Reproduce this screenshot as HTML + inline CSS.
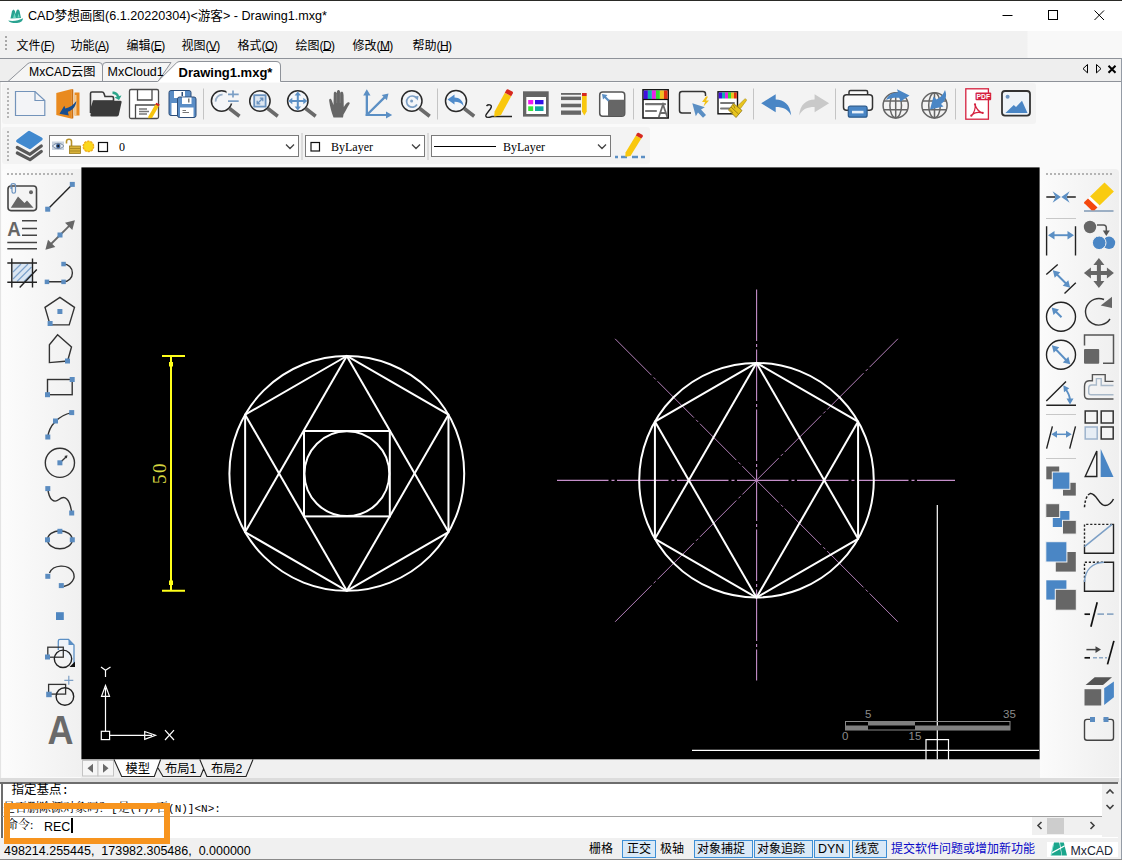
<!DOCTYPE html>
<html lang="zh">
<head>
<meta charset="utf-8">
<title>CAD梦想画图</title>
<style>
*{box-sizing:border-box;margin:0;padding:0}
html,body{width:1122px;height:860px;overflow:hidden;background:#f0f0f0}
body{position:relative;font-family:"Liberation Sans","Noto Sans CJK SC",sans-serif;font-size:12px;color:#000}
.abs{position:absolute}
.t{position:absolute;white-space:nowrap;line-height:1}
#topline{left:0;top:0;width:1122px;height:1px;background:#2a2a26}
#titlebar{left:0;top:1px;width:1122px;height:30px;background:#fff}
#menubar{left:0;top:31px;width:1122px;height:27px;background:linear-gradient(90deg,#f1f1f1 0,#f1f1f1 1027px,#f8f8f8 1028px)}
#tabbar{left:0;top:58px;width:1122px;height:24px;background:#eeeeee;border-top:1px solid #8e9299}
#tb1{left:0;top:82px;width:1040px;height:44px}
#dock{left:0;top:82px;width:1122px;height:696px;background:#fafafa}
#tb1bg{left:2px;top:83px;width:1034px;height:41px;background:#f3f3f3;border-radius:3px}
#tb2bg{left:2px;top:127px;width:648px;height:37px;background:#f3f3f3;border-radius:3px}
#lbg{left:2px;top:169px;width:79px;height:608px;background:linear-gradient(90deg,#fcfcfc,#f0f0f0);border-radius:4px 0 0 0}
#rbg{left:1040px;top:169px;width:79px;height:608px;background:linear-gradient(90deg,#fbfbfb,#efefef);border-radius:0 4px 0 0}
#ledge{left:0;top:82px;width:1px;height:696px;background:#e4e4e4}
#tb2{left:0;top:127px;width:660px;height:40px}
#leftbar{left:0;top:168px;width:82px;height:591px}
#rightbar{left:1040px;top:168px;width:82px;height:591px}
#canvas{left:81px;top:167px;width:959px;height:593px;overflow:hidden;z-index:2}
#cmd{left:0;top:782px;width:1122px;height:56px;background:#fff}
#status{left:0;top:838px;width:1122px;height:22px;background:#f0f0f0}
.mi{top:9px;font-size:12px;margin-left:-0.5px}
.ml{letter-spacing:-0.6px}
#laytabs{left:82px;top:759px;width:958px;height:19px;background:#f0f0f0;box-shadow:-1px 0 0 #f0f0f0}
#orange{left:4px;top:803px;width:166px;height:40.500px;border:6px solid #f7941e;z-index:5}
.st{top:5px;font-size:12px}
.sb{top:2px;height:18px;background:#d9e9f7;border:1px solid #3d8fd6}
.sim{font-family:"Liberation Mono","Noto Serif CJK SC",monospace;font-size:10px}
u{text-decoration:underline;text-underline-offset:0}
</style>
</head>
<body>
<div id="topline" class="abs"></div>
<div id="titlebar" class="abs">
  <svg class="abs" style="left:7px;top:7px" width="18" height="17" viewBox="7 8 18 17"><path d="M10.500 18.500 L12 11 L13.500 9.500 L15 11 L15.500 14 L16.500 10.500 L18 9.200 L19.500 10.800 L21 18Z" fill="#2aa391"/><path d="M13 18 L14.500 13 L16 18Z M17.500 17.500 l1-4 l1.200 4z" fill="#6fd6c0"/><path d="M8.200 20.500 C13 21.500 19 20.500 23 18.300 C23 21 21 22.800 17 23 C13 23.200 9.500 22.500 8.200 20.500Z" fill="#2aa391"/></svg>
  <div class="t" id="title" style="left:28px;top:9px;font-size:12.6px">CAD梦想画图(6.1.20220304)&lt;游客&gt; - Drawing1.mxg*</div>
  <svg class="abs" style="left:984px;top:0" width="138" height="30" viewBox="0 0 138 30" fill="none" stroke="#000" stroke-width="1">
    <path d="M18.5 14.5h10"/><rect x="64.5" y="9.5" width="9" height="9"/><path d="M110.5 9.5l9.5 9.5M120 9.5l-9.5 9.5"/>
  </svg>
</div>
<div id="menubar" class="abs"><div class="abs" style="left:5px;top:5px;width:2px;height:2px;background:#a8a8a8;box-shadow:0 4px 0 #a8a8a8,0 8px 0 #a8a8a8,0 12px 0 #a8a8a8"></div>
  <div class="t mi" style="left:17px">文件<span class="ml">(<u>F</u>)</span></div>
  <div class="t mi" style="left:71px">功能<span class="ml">(<u>A</u>)</span></div>
  <div class="t mi" style="left:127px">编辑<span class="ml">(<u>E</u>)</span></div>
  <div class="t mi" style="left:182px">视图<span class="ml">(<u>V</u>)</span></div>
  <div class="t mi" style="left:238px">格式<span class="ml">(<u>O</u>)</span></div>
  <div class="t mi" style="left:296px">绘图<span class="ml">(<u>D</u>)</span></div>
  <div class="t mi" style="left:353px">修改<span class="ml">(<u>M</u>)</span></div>
  <div class="t mi" style="left:413px">帮助<span class="ml">(<u>H</u>)</span></div>
</div>
<div id="tabbar" class="abs">
  <svg class="abs" style="left:0;top:0" width="1122" height="24" viewBox="0 0 1122 24">
    <path d="M8 22.500 L28 4.500 Q29.500 3.500 31.500 3.500 H99 Q102.500 3.500 102.500 7 V22.500" fill="#f5f5f5" stroke="#8e9299"/>
    <path d="M102.500 22.500 V7 Q102.500 3.500 106 3.500 H171 L158 22.500" fill="#f5f5f5" stroke="#8e9299"/>
    <path d="M157.700 23 L176.500 4 Q178 3 180 3 H276 Q280 3 280 7 V23 Z" fill="#fff"/>
    <path d="M0 22.500 H157.700 L176.300 4 Q177.800 2.500 180 2.500 H276 Q280.500 2.500 280.500 7 V22.500 H1122" fill="none" stroke="#8e9299"/>
    <g fill="none" stroke="#000" stroke-width="1"><path d="M1087.500 5.500 l-4.500 4.200 l4.500 4.200z"/><path d="M1096.500 5.500 l4.500 4.200 l-4.500 4.200z"/></g>
    <path d="M1108.500 6.800 l7 7 M1115.500 6.800 l-7 7" stroke="#000" stroke-width="2" fill="none"/>
  </svg>
  <div class="t" style="left:29px;top:7px;font-size:12.2px">MxCAD云图</div>
  <div class="t" style="left:107.500px;top:7px;font-size:12.5px">MxCloud1</div>
  <div class="t" style="left:178.500px;top:7px;font-size:13px;font-weight:bold">Drawing1.mxg*</div>
</div>
<div id="dock" class="abs"></div><div id="ledge" class="abs"></div><div id="tb1bg" class="abs"></div><div id="tb2bg" class="abs"></div><div id="lbg" class="abs"></div><div id="rbg" class="abs"></div>
<div id="tb1" class="abs"><svg class="abs" style="left:0;top:0" width="1040" height="44" viewBox="0 82 1040 44">
<!-- gripper -->
<g fill="#b4b4b4"><rect x="7" y="88" width="2" height="2"/><rect x="7" y="92" width="2" height="2"/><rect x="7" y="96" width="2" height="2"/><rect x="7" y="100" width="2" height="2"/><rect x="7" y="104" width="2" height="2"/><rect x="7" y="108" width="2" height="2"/><rect x="7" y="112" width="2" height="2"/><rect x="7" y="116" width="2" height="2"/></g>
<!-- separators -->
<g stroke="#c4c4c4" stroke-width="1"><path d="M203.500 88.500V119.500M437.500 88.500V119.500M633.500 88.500V119.500M753.500 88.500V119.500M835.500 88.500V119.500M955.500 88.500V119.500"/></g>
<!-- 1 new -->
<path d="M15.500 91.500H35L44.800 100.500V115.500H15.500Z" fill="#f3f4f7" stroke="#7393ba" stroke-width="1.2"/>
<path d="M35 91.500V100.500H44.800" fill="none" stroke="#7393ba" stroke-width="1.200"/>
<!-- 2 open (orange) -->
<path d="M56.300 93 L71.800 89 V118.800 L56.300 115Z" fill="#e98a1f"/>
<path d="M71.800 89 l1.500 0.500 V118.300 l-1.500 0.500Z" fill="#c96f12"/>
<rect x="74.500" y="92.500" width="5" height="23" fill="#e98a1f"/>
<rect x="74.500" y="95" width="2" height="20.500" fill="#f4c98f"/>
<path d="M76.300 101 C76 106.500 72.500 110.500 67.800 111.800 L68.800 115.600 L59.500 113.800 L64.300 105.800 L65.300 108.600 C69.500 107.600 73.500 105 76.300 101Z" fill="#174d8f"/>
<!-- 3 open folder dark -->
<path d="M90.500 93.500 Q90.500 92 92 92 H102 Q103.500 92 104 93.500 L105 96.500 H112 Q113.500 96.500 113.500 98 V101 H93.500 L90.500 113Z" fill="#f4f4f4" stroke="#3a3a3a" stroke-width="1.600"/>
<path d="M94.500 100.800 H120.500 Q122 100.800 121.600 102.300 L118.800 115 Q118.400 116.400 117 116.400 H91.500 Q90 116.400 90.400 115 L93.200 102 Q93.500 100.800 94.500 100.800Z" fill="#3a3a3a"/>
<path d="M112.500 91.500 C116 91.500 118.500 93.500 119 96 L121.500 95.500 L119 100 L114.500 97.500 L116.800 96.800 C116.300 95 114.500 94 112.500 94Z" fill="#2aa58a"/>
<!-- 4 save -->
<rect x="129.500" y="89.500" width="29" height="29" rx="1.500" fill="#fff" stroke="#4a4a4a" stroke-width="1.300"/>
<path d="M137.500 89.500V100H152V89.500" fill="none" stroke="#4a4a4a" stroke-width="1.300"/>
<path d="M135.500 118.500V105H158.500" fill="none" stroke="#4a4a4a" stroke-width="1.300"/>
<path d="M139 109H147M139 111.500H149M139 114H147" stroke="#777" stroke-width="1.500"/>
<path d="M155.300 104.500 L158.800 106.300 L152 118 L148.200 118.300 L148.500 116.200Z" fill="#f6c40e"/>
<path d="M155.300 104.500 L156.300 102.800 L159.800 104.600 L158.800 106.300Z" fill="#d6281e"/>
<!-- 5 save all -->
<rect x="169" y="90.500" width="22" height="25" rx="2" fill="#5a8dc6" stroke="#2d4d78" stroke-width="1"/>
<rect x="174" y="91" width="11" height="7" fill="#fff"/><rect x="181.500" y="92" width="1.500" height="4" fill="#2d4d78"/>
<rect x="171.500" y="103" width="6" height="12" fill="#fff"/>
<rect x="177.500" y="97" width="18.500" height="20.500" rx="2" fill="#5a8dc6" stroke="#2d4d78" stroke-width="1"/>
<rect x="182" y="97.500" width="9.500" height="6.500" fill="#fff"/><rect x="188" y="98.500" width="1.500" height="4" fill="#777"/>
<rect x="180" y="107.500" width="13.500" height="9.500" fill="#fff"/>
<path d="M182.500 110.500H186M182.500 112.500H189" stroke="#777" stroke-width="1"/>
<!-- magnifiers -->
<g id="mags" fill="none">
<g stroke="#6a6a6a" stroke-width="3.600" stroke-linecap="butt"><path d="M229.500 108.500L239.500 116.200M267.800 108.500L277.800 116.200M305.700 108.500L315.700 116.200M419.700 108.500L429.700 116.200M464.200 108.500L474.200 116.200"/></g>
<g stroke="#2a2a2a" stroke-width="1.500" fill="#f4f6f9"><circle cx="221.600" cy="101" r="10.200"/><circle cx="259.900" cy="101" r="10.200"/><circle cx="297.800" cy="101" r="10.200"/><circle cx="411.800" cy="101" r="10.200"/><circle cx="456" cy="101" r="10.500"/></g>
</g>
<!-- 6 zoom +- -->
<rect x="226.500" y="89.500" width="13" height="14" fill="#f6f6f6"/>
<path d="M215.700 101.600 A6.500 6.500 0 0 1 222.600 94.700" fill="none" stroke="#9ab0c8" stroke-width="1.800"/>
<path d="M233 90.600V97.600M228 94.400H238.700M228 101.100H238.700" fill="none" stroke="#7c9fc5" stroke-width="1.700"/>
<!-- 7 zoom extents -->
<rect x="254.200" y="95.200" width="11.400" height="11.400" fill="#dfe8f2" stroke="#6b93c0" stroke-width="1.800"/>
<path d="M257.500 103.500L262.500 98.500M257.200 100.800V103.800H260.200M259.800 98.200H262.800V101.200" fill="none" stroke="#6b93c0" stroke-width="1.300"/>
<!-- 8 zoom pan -->
<path d="M297.800 91.500L301 95.500H298.800V100H303.300V97.800L307.300 101L303.300 104.200V102H298.800V106.500H301L297.800 110.500L294.600 106.500H296.800V102H292.300V104.200L288.300 101L292.300 97.800V100H296.800V95.500H294.600Z" fill="#5b8fc4"/>
<!-- 9 hand -->
<path d="M333.500 117.400 C331.500 112 330 107 329.200 101 C328.800 98.500 331 98 331.800 100.500 L333.500 105 L333.800 93.500 C333.800 91.200 336.300 91.200 336.500 93.500 L337 91.500 C337.200 89.400 339.800 89.400 340 91.500 L340.500 93 C340.800 91 343.300 91.200 343.300 93.500 L343.800 107 C345 105 346.500 103 348 102.300 C349.500 101.700 350.300 103 349.300 104.300 C347 107.500 346 111 343.500 114.500 L343 117.400Z" fill="#666"/>
<path d="M336.700 94V103M340.200 93V103M343.400 94.500V104" stroke="#8a8a8a" stroke-width="0.600"/>
<!-- 10 axes -->
<g fill="#5b8fc4" stroke="none"><path d="M365.700 116H368V95.500H370.500L366.800 89.300L363.200 95.500H365.700Z"/><path d="M365.700 113.900H386V111.400L392.200 115L386 118.600V116.100H365.700Z"/><path d="M366 114.200L383.500 96.800L381.700 95L388.500 93.400L386.900 100.200L385.100 98.400L367.600 115.800Z"/></g>
<!-- 11 zoom realtime -->
<path d="M416.500 98 A5.600 5.600 0 1 0 417 104.500" fill="none" stroke="#7c9fc5" stroke-width="1.700"/>
<path d="M414 96.500L418.500 96L417.800 100.500Z" fill="#7c9fc5"/><circle cx="411.600" cy="101" r="1.500" fill="#7c9fc5"/>
<!-- 12 zoom previous -->
<path d="M447.500 99.500L454.500 94.500V97.500C459.500 97.500 463 100.500 463.500 106C461.500 103 458.500 101.800 454.500 101.800V104.500Z" fill="#4f8bcb"/>
<!-- 13 pencil -->
<path d="M486.500 106C488 104.300 491.800 104.300 491.300 107C490.800 110 485.300 113.500 485.800 116C486.300 118 489 117.500 492 116.500H512" fill="none" stroke="#222" stroke-width="1.400"/>
<path d="M504.800 92.800L511.200 96.200L501 115L494.200 116.800L494.600 111.500Z" fill="#f9c80e"/>
<path d="M504.800 92.800L506.300 90C506.800 89.200 507.500 89 508.300 89.400L512.300 91.500C513 92 513.200 92.700 512.800 93.500L511.200 96.200Z" fill="#d6281e"/>
<!-- 14 colour table -->
<rect x="523" y="91.300" width="25.700" height="25.300" fill="#646464"/>
<rect x="526.300" y="97" width="19.700" height="17" fill="#fff"/>
<rect x="528.200" y="100" width="5" height="4.300" fill="#f018f0"/><rect x="535" y="100" width="8.500" height="4.300" fill="#3010e8"/>
<rect x="528.200" y="106.300" width="5" height="4.700" fill="#38e838"/><rect x="535" y="106.300" width="8.500" height="4.700" fill="#10a8a0"/>
<!-- 15 list -->
<g fill="#666"><rect x="561" y="93" width="20" height="1.800"/><rect x="561" y="96.600" width="20" height="3.500"/><rect x="561" y="103.700" width="20" height="3.600"/><rect x="561" y="110.500" width="20" height="4.300"/></g>
<path d="M582 96H586.700V111.500L584.350 115.500L582 111.500Z" fill="#f9c80e"/><rect x="582" y="93" width="4.700" height="3" fill="#d6281e"/>
<!-- 16 layout -->
<rect x="599.700" y="92" width="25" height="24.300" rx="3" fill="#fff" stroke="#555" stroke-width="1.500"/>
<path d="M608 99.800H624.500V113.500Q624.500 116 622 116H608Z" fill="#666"/>
<path d="M602 94L607.500 95L606 96.500L609.500 100L608 101.500L604.500 98L603 99.500Z" fill="#5b8fc4"/>
<!-- 17 text style -->
<rect x="643" y="89.800" width="25.200" height="28.200" fill="#fff" stroke="#111" stroke-width="1.500"/>
<g><rect x="643.700" y="90.500" width="4.200" height="8.500" fill="#4010e0"/><rect x="647.900" y="90.500" width="4" height="8.500" fill="#10b0b0"/><rect x="651.900" y="90.500" width="4" height="8.500" fill="#e820e8"/><rect x="655.900" y="90.500" width="4" height="8.500" fill="#30e030"/><rect x="659.900" y="90.500" width="4" height="8.500" fill="#f0c020"/><rect x="663.900" y="90.500" width="3.600" height="8.500" fill="#e03010"/></g>
<path d="M643 99.500H668" stroke="#111" stroke-width="1.200"/>
<path d="M646 104.200H665M646 111H656" stroke="#777" stroke-width="2.200" stroke-linecap="round"/>
<path d="M658.800 117L663 104.500L667.300 117M660.300 113H665.800" fill="none" stroke="#6a6a6a" stroke-width="1.800"/>
<!-- 18 quick select -->
<path d="M691 113H682Q679.500 113 679.500 110.500V94Q679.500 91.500 682 91.500H703Q705.500 91.500 705.500 94V96" fill="none" stroke="#333" stroke-width="1.500"/>
<path d="M692.300 103.200L704.800 107.300L701 109.600L706 115L703 117.800L698 112.400L695.800 116.300Z" fill="#5b8fc4"/>
<path d="M706 96.500L702 102H705L703.500 106.500L709 100.500H706L708 96.500Z" fill="#f2c216"/>
<!-- 19 brush -->
<rect x="718" y="91.800" width="19.500" height="22" fill="#fff" stroke="#111" stroke-width="1.400"/>
<g><rect x="718.700" y="92.500" width="3.300" height="6" fill="#4010e0"/><rect x="722" y="92.500" width="3" height="6" fill="#10b0b0"/><rect x="725" y="92.500" width="3" height="6" fill="#e820e8"/><rect x="728" y="92.500" width="3" height="6" fill="#30e030"/><rect x="731" y="92.500" width="3" height="6" fill="#f0c020"/><rect x="734" y="92.500" width="2.800" height="6" fill="#e03010"/></g>
<path d="M721 103H734M721 108.500H730" stroke="#777" stroke-width="2" stroke-linecap="round"/>
<path d="M744.500 99.200C745.500 98.300 747 99.500 746.300 100.700L740.500 108.500L737.500 106Z" fill="#e8c41c" stroke="#a88a10" stroke-width="0.600"/>
<path d="M733.500 103.500L742 110.500L736 117.500L728.500 110Z" fill="#e8c41c" stroke="#8a7210" stroke-width="0.800"/>
<path d="M731 107L738.500 114M733.500 105L735 108.500M730 109.500L733 113" stroke="#8a7210" stroke-width="0.800" fill="none"/>
<!-- 20 undo -->
<path d="M761.200 103.300L775.700 94.200V99.500C784 99.500 790.200 104.500 791.200 115.500C788 109 783 107 775.700 107V112.300Z" fill="#4a86c5"/>
<!-- 21 redo -->
<path d="M829.100 103.300L814.600 94.200V99.500C806.300 99.500 800.100 104.500 799.100 115.500C802.300 109 807.300 107 814.600 107V112.300Z" fill="#c9c9c9"/>
<!-- 22 print -->
<rect x="849" y="90.500" width="18.600" height="6" rx="1.500" fill="#fafafa" stroke="#333" stroke-width="1.500"/>
<rect x="843.500" y="94.800" width="29" height="15.400" rx="3" fill="#fafafa" stroke="#333" stroke-width="1.500"/>
<rect x="848.300" y="106.200" width="18.800" height="11" rx="2" fill="#4a86c5" stroke="#2b5a8c" stroke-width="1.200"/>
<rect x="852" y="110.800" width="11.500" height="2.600" fill="#e8f1fa"/>
<!-- 23 globe up -->
<g fill="none" stroke="#666" stroke-width="1.500"><circle cx="895.700" cy="105.400" r="12.600"/><ellipse cx="895.700" cy="105.400" rx="5.800" ry="12.600"/><path d="M895.700 92.800V118M883.800 101H907.600M883.800 109.800H907.600"/>
<circle cx="934.500" cy="105.400" r="12.600"/><ellipse cx="934.500" cy="105.400" rx="5.800" ry="12.600"/><path d="M934.500 92.800V118M922.600 101H946.400M922.600 109.800H946.400"/></g>
<path d="M886 100C888 95 892 92.500 898 92.500L897 89.300L909.500 95.500L900.500 101.500L899.500 97.800C894.500 97.500 890 98 886 100Z" fill="#4a86c5"/>
<!-- 24 globe down -->
<path d="M945 90C947.500 96 945.500 101 941 104L943.500 106.500L930 109.500L933.500 96.500L936.500 99.500C940.500 97.500 943.500 94.500 945 90Z" fill="#4a86c5"/>
<!-- 25 pdf -->
<rect x="965.800" y="88.800" width="22.600" height="30.400" fill="#fff" stroke="#d5213f" stroke-width="1.300"/>
<rect x="975.500" y="92.600" width="15.700" height="7.600" rx="1" fill="#d5213f"/>
<text x="976.600" y="99" font-family="'Liberation Sans',sans-serif" font-weight="bold" font-size="6.800" fill="#fff" textLength="13.500" lengthAdjust="spacingAndGlyphs">PDF</text>
<path d="M975 104.500C976 108 974 113 971.500 115.500M975 104.500C976.500 109.500 979.500 112 982.500 112.800M971.500 115.500C974 112.500 978.500 111.800 982.500 112.800" fill="none" stroke="#d5213f" stroke-width="1.200"/>
<circle cx="975" cy="104.300" r="1.100" fill="#d5213f"/><circle cx="971.300" cy="115.700" r="1.100" fill="#d5213f"/><circle cx="982.700" cy="112.900" r="1.100" fill="#d5213f"/>
<!-- 26 image -->
<rect x="1002" y="91" width="28" height="24.600" rx="3" fill="#eef3f8" stroke="#333" stroke-width="1.800"/>
<circle cx="1007.600" cy="96.700" r="2" fill="#6b93c0"/>
<path d="M1005.400 112.900L1013.800 105L1016 107L1022 100.800L1027.500 112.900Z" fill="#4a86c5"/>
</svg>
</div><!--/tb1-->
<div id="tb2" class="abs"><svg class="abs" style="left:0;top:0" width="660" height="40" viewBox="0 127 660 40">
<g fill="#b4b4b4"><rect x="7" y="131" width="2" height="2"/><rect x="7" y="135" width="2" height="2"/><rect x="7" y="139" width="2" height="2"/><rect x="7" y="143" width="2" height="2"/><rect x="7" y="147" width="2" height="2"/><rect x="7" y="151" width="2" height="2"/><rect x="7" y="155" width="2" height="2"/><rect x="7" y="159" width="2" height="2"/></g>
<g stroke="#c4c4c4" stroke-width="1"><path d="M302 133V160M428 133V160"/></g>
<!-- layers icon -->
<path d="M17.300 153L30 159.700L41.300 151.500" fill="none" stroke="#585858" stroke-width="3.200" stroke-linecap="round" stroke-linejoin="round"/>
<path d="M17.300 147.500L30 154.300L41.300 146" fill="none" stroke="#585858" stroke-width="3.200" stroke-linecap="round" stroke-linejoin="round"/>
<path d="M29 132.500L41 139L30 147.500L17.800 141Z" fill="#4189cf" stroke="#f6f6f6" stroke-width="5.400" stroke-linejoin="round"/>
<path d="M29 132.500L41 139L30 147.500L17.800 141Z" fill="#4189cf" stroke="#4189cf" stroke-width="3.400" stroke-linejoin="round"/>
<!-- combos -->
<rect x="49.500" y="135.500" width="249" height="21" fill="#fff" stroke="#7a7a7a"/>
<rect x="305.500" y="135.500" width="119" height="21" fill="#fff" stroke="#7a7a7a"/>
<rect x="431.500" y="135.500" width="179" height="21" fill="#fff" stroke="#7a7a7a"/>
<g fill="none" stroke="#444" stroke-width="1.300"><path d="M286 144.500L290 148.500L294 144.500M412 144.500L416 148.500L420 144.500M598 144.500L602 148.500L606 144.500"/></g>
<!-- eye -->
<rect x="52" y="141.500" width="12" height="8.500" fill="#c9d3e0"/>
<path d="M52.500 146C55 142.500 61 142.500 63.800 146C61 149.500 55 149.500 52.500 146Z" fill="#e8eef5" stroke="#5a6f8c" stroke-width="0.800"/>
<circle cx="58.200" cy="146" r="2.300" fill="#3a5f95"/><circle cx="58.200" cy="146" r="1" fill="#111"/>
<!-- lock -->
<path d="M66.500 143.500V141.500C66.500 138.500 71.500 138.500 71.500 141.500V146" fill="none" stroke="#b8922a" stroke-width="1.600"/>
<rect x="69.500" y="146" width="11" height="7.500" fill="#d9b23a" stroke="#9a7a1a" stroke-width="0.800"/>
<path d="M70 148.500H80M70 151H80" stroke="#9a7a1a" stroke-width="0.700"/>
<!-- sun -->
<circle cx="88.400" cy="146.400" r="5.300" fill="#f9cf16" stroke="#f0a818" stroke-width="1.200" stroke-dasharray="2.200 1.100"/>
<circle cx="88.400" cy="146.400" r="4.200" fill="#fbd81c"/>
<!-- squares -->
<rect x="98.500" y="142.500" width="9" height="9" fill="#fff" stroke="#111" stroke-width="1.200"/>
<rect x="311" y="142.500" width="8.500" height="8.500" fill="#fff" stroke="#111" stroke-width="1.200"/>
<path d="M434 146.500H496" stroke="#000" stroke-width="1"/>
<!-- pencil -->
<path d="M615 157H618M621 157H627M632 157H638M641 157H645" stroke="#5b8fc4" stroke-width="2.600"/>
<path d="M635.800 135.500L641.300 138.500L630.500 156L625.300 156.800L625.500 152.500Z" fill="#f9c80e"/>
<path d="M635.800 135.500L637 133.500C637.500 132.700 638.200 132.600 639 133L642.300 134.800C643 135.300 643.100 136 642.700 136.700L641.300 138.500Z" fill="#d6281e"/>
</svg>
<div class="t" style="left:119px;top:14px;font-family:'Liberation Serif',serif;font-size:12px">0</div>
<div class="t" style="left:331px;top:14px;font-family:'Liberation Serif',serif;font-size:12px">ByLayer</div>
<div class="t" style="left:503px;top:14px;font-family:'Liberation Serif',serif;font-size:12px">ByLayer</div>
</div><!--/tb2-->
<div id="leftbar" class="abs"><svg class="abs" style="left:0;top:0" width="82" height="591" viewBox="0 168 82 591">
<g fill="#b4b4b4"><rect x="7" y="173" width="2" height="2"/><rect x="11" y="173" width="2" height="2"/><rect x="15" y="173" width="2" height="2"/><rect x="19" y="173" width="2" height="2"/><rect x="23" y="173" width="2" height="2"/><rect x="27" y="173" width="2" height="2"/><rect x="31" y="173" width="2" height="2"/><rect x="35" y="173" width="2" height="2"/><rect x="39" y="173" width="2" height="2"/><rect x="43" y="173" width="2" height="2"/><rect x="47" y="173" width="2" height="2"/><rect x="51" y="173" width="2" height="2"/><rect x="55" y="173" width="2" height="2"/><rect x="59" y="173" width="2" height="2"/><rect x="63" y="173" width="2" height="2"/><rect x="67" y="173" width="2" height="2"/><rect x="71" y="173" width="2" height="2"/></g>
<!-- image icon -->
<rect x="8" y="186" width="28.500" height="24.600" rx="3" fill="#f4f4f4" stroke="#444" stroke-width="1.600"/>
<circle cx="31" cy="192.300" r="2" fill="#666"/>
<path d="M10.800 207.800L18 196.500L24.500 203L27 200.500L33.500 207.800Z" fill="#666"/>
<path d="M11 189V185.500C11 183 15.500 183 15.500 185.500V191.500C15.500 193.800 12 193.800 12 191.500V187" fill="none" stroke="#6b93c0" stroke-width="1.200"/>
<!-- text icon -->
<text x="7.300" y="236" font-family="'Liberation Sans',sans-serif" font-weight="bold" font-size="20" fill="#666" textLength="13.500" lengthAdjust="spacingAndGlyphs">A</text>
<path d="M22 220.800H37M22 228.500H37M22 235.300H37M7.300 242.600H37M7.300 248.700H37" stroke="#444" stroke-width="1.500"/>
<!-- hatch icon -->
<rect x="12.500" y="263.700" width="19.500" height="18" fill="#dbe6f2"/>
<path d="M13 272L21 264M13 279L28 264M17 281.500L31.500 267M24 281.500L31.500 274" stroke="#7ea3cc" stroke-width="1.200"/>
<path d="M11.800 258.500V287.500M32.500 258.500V287.500M7.300 263H37M7.300 282.200H37" stroke="#222" stroke-width="1.400"/>
<path d="M36.800 269.400L19.700 287.500" stroke="#222" stroke-width="1.400"/>
<!-- line -->
<path d="M47.700 209.200L72.300 184.400" stroke="#222" stroke-width="1.400"/>
<g fill="#5b8cc0"><rect x="45.200" y="206.700" width="5" height="5"/><rect x="69.800" y="181.900" width="5" height="5"/></g>
<!-- xline -->
<path d="M50 245L70.500 224.600" stroke="#666" stroke-width="1.800"/>
<path d="M45.400 249.700L48 239.800L55.300 247.100ZM74.900 220.200L72.300 230.100L65 222.800Z" fill="#666"/>
<rect x="57.500" y="232.500" width="5" height="5" fill="#5b8cc0"/>
<!-- pline -->
<path d="M46.900 281.800H63.500A8.900 8.900 0 0 0 63.500 264" fill="none" stroke="#333" stroke-width="1.400"/>
<g fill="#5b8cc0"><rect x="44.700" y="279.600" width="4.500" height="4.500"/><rect x="61.300" y="279.600" width="4.500" height="4.500"/><rect x="61.300" y="261.800" width="4.500" height="4.500"/></g>
<!-- polygon -->
<path d="M59.900 297.400L74.500 307.400L69.200 324.900H50.100L45 307.400Z" fill="none" stroke="#333" stroke-width="1.400"/>
<g fill="#5b8cc0"><rect x="57.400" y="309" width="5" height="5"/><rect x="47.600" y="321" width="5" height="5"/></g>
<!-- irregular polygon -->
<path d="M57.600 334.700L71.500 347L67.600 361L49.400 362.600V344.700Z" fill="none" stroke="#333" stroke-width="1.400"/>
<rect x="65" y="358.500" width="5" height="5" fill="#5b8cc0"/>
<!-- rectangle -->
<rect x="47.500" y="379.500" width="24.700" height="15.200" fill="none" stroke="#333" stroke-width="1.400"/>
<g fill="#5b8cc0"><rect x="69.700" y="377" width="5" height="5"/><rect x="45" y="392.200" width="5" height="5"/></g>
<!-- arc -->
<path d="M47.800 437C49 426 58 415.500 71.700 412.600" fill="none" stroke="#333" stroke-width="1.400"/>
<g fill="#5b8cc0"><rect x="69.200" y="410.100" width="5" height="5"/><rect x="53" y="418.500" width="5" height="5"/><rect x="45.300" y="434.500" width="5" height="5"/></g>
<!-- circle -->
<circle cx="59.900" cy="462.800" r="14.600" fill="none" stroke="#333" stroke-width="1.400"/>
<path d="M60 462.800L66 457" stroke="#333" stroke-width="1.300"/><path d="M67.500 455.300L66.800 458.600L64.300 456Z" fill="#333"/>
<rect x="57.400" y="460.300" width="5" height="5" fill="#5b8cc0"/>
<!-- spline -->
<path d="M47.800 488.600C49 500 54 503.500 59 499.500C64.500 495 70 498 71.700 513" fill="none" stroke="#333" stroke-width="1.400"/>
<g fill="#5b8cc0"><rect x="45.300" y="486.100" width="5" height="5"/><rect x="69.200" y="510.500" width="5" height="5"/></g>
<!-- ellipse -->
<ellipse cx="59.900" cy="539.800" rx="12.400" ry="9" fill="none" stroke="#333" stroke-width="1.400"/>
<g fill="#5b8cc0"><rect x="45" y="537.300" width="5" height="5"/><rect x="57.400" y="528.800" width="5" height="5"/><rect x="69.800" y="537.300" width="5" height="5"/></g>
<!-- ellipse arc -->
<path d="M49.500 573C53 564.500 68 563.500 73 572C76.500 578.500 71 585 63.500 586.500" fill="none" stroke="#333" stroke-width="1.400"/>
<g fill="#5b8cc0"><rect x="45.300" y="573.800" width="5" height="5"/><rect x="58.800" y="583.100" width="5" height="5"/></g>
<!-- point -->
<rect x="56" y="612.200" width="7.800" height="7.800" fill="#4f86c0"/>
<!-- block insert -->
<path d="M58.300 650V641Q58.300 639.300 60 639.300H68.500L74 645V664" fill="#eef3f9" stroke="#5b8fc4" stroke-width="1.300"/>
<path d="M68.500 639.300V645H74Z" fill="#5b8fc4"/>
<rect x="47.800" y="647.200" width="15.500" height="10" fill="none" stroke="#333" stroke-width="1.300"/>
<circle cx="63" cy="658.800" r="8.700" fill="none" stroke="#222" stroke-width="1.400"/>
<rect x="45" y="654.500" width="5" height="5" fill="#5b8cc0"/>
<path d="M75 661.500V667H69.500Z" fill="#111"/>
<!-- block make -->
<rect x="48.600" y="684.400" width="17" height="9.700" fill="none" stroke="#333" stroke-width="1.300"/>
<circle cx="64.900" cy="696.500" r="8.800" fill="none" stroke="#222" stroke-width="1.400"/>
<rect x="46.200" y="691.700" width="5.500" height="5.500" fill="#5b8cc0"/>
<path d="M68.800 675.800V684.800M64.300 680.300H73.300" stroke="#7c9fc5" stroke-width="1.200"/>
<!-- A -->
<text x="47.500" y="744" font-family="'Liberation Sans',sans-serif" font-weight="bold" font-size="41" fill="#6a6a6a" textLength="26" lengthAdjust="spacingAndGlyphs">A</text>
</svg>
</div><!--/leftbar-->
<div id="rightbar" class="abs"><svg class="abs" style="left:0;top:0" width="82" height="591" viewBox="1040 168 82 591">
<g fill="#b4b4b4"><rect x="1046" y="173" width="2" height="2"/><rect x="1050" y="173" width="2" height="2"/><rect x="1054" y="173" width="2" height="2"/><rect x="1058" y="173" width="2" height="2"/><rect x="1062" y="173" width="2" height="2"/><rect x="1066" y="173" width="2" height="2"/><rect x="1070" y="173" width="2" height="2"/><rect x="1074" y="173" width="2" height="2"/><rect x="1078" y="173" width="2" height="2"/><rect x="1082" y="173" width="2" height="2"/><rect x="1086" y="173" width="2" height="2"/><rect x="1090" y="173" width="2" height="2"/><rect x="1094" y="173" width="2" height="2"/><rect x="1098" y="173" width="2" height="2"/><rect x="1102" y="173" width="2" height="2"/><rect x="1106" y="173" width="2" height="2"/><rect x="1110" y="173" width="2" height="2"/></g>
<g stroke="#c8c8c8" stroke-width="1"><path d="M1046 218.500H1076M1046 414.500H1076M1046 458.500H1076"/></g>
<!-- dim 1 -->
<path d="M1046.300 197H1055.500M1067 197H1075.800" stroke="#222" stroke-width="1.600"/>
<path d="M1052.600 191.300L1060.900 197L1052.600 202.700L1055.600 197ZM1069.600 191.300L1061.300 197L1069.600 202.700L1066.600 197Z" fill="#5b8fc4"/>
<!-- linear dim -->
<path d="M1046.600 226.200V255.600M1075.500 226.200V255.600" stroke="#222" stroke-width="1.400"/>
<path d="M1052 235.200H1070" stroke="#5b8fc4" stroke-width="1.900"/>
<path d="M1048 235.200L1054.500 231V239.400ZM1074 235.200L1067.500 231V239.400Z" fill="#5b8fc4"/>
<!-- aligned dim -->
<path d="M1046.300 274.500L1057.700 264.400M1064.500 293.400L1075.800 282.800" stroke="#222" stroke-width="1.400"/>
<path d="M1056 273.500L1067 284.500" stroke="#5b8fc4" stroke-width="1.900"/>
<path d="M1052.800 270.300L1060.300 272.200L1054.700 277.800ZM1070.200 287.700L1062.700 285.800L1068.300 280.200Z" fill="#5b8fc4"/>
<!-- radius dim -->
<circle cx="1061" cy="316.700" r="14.500" fill="none" stroke="#222" stroke-width="1.400"/>
<path d="M1061.500 317.200L1055 310.800" stroke="#5b8fc4" stroke-width="1.900"/>
<path d="M1051.600 307.600L1059 309.400L1053.500 315Z" fill="#5b8fc4"/>
<!-- diameter dim -->
<circle cx="1061" cy="354.700" r="14.500" fill="none" stroke="#222" stroke-width="1.400"/>
<path d="M1055 348.500L1067 361" stroke="#5b8fc4" stroke-width="1.900"/>
<path d="M1051.800 345.300L1059.300 347.200L1053.700 352.800ZM1070.300 364.300L1062.800 362.400L1068.400 356.800Z" fill="#5b8fc4"/>
<!-- angular dim -->
<path d="M1046.300 401L1066 381.400M1046.300 405.300H1076" stroke="#222" stroke-width="1.400"/>
<path d="M1065.500 389C1068.500 393 1069.800 396.500 1070 400" fill="none" stroke="#5b8fc4" stroke-width="1.900"/>
<path d="M1063.300 385.200L1069.300 388.300L1064 392.300ZM1070 404.500L1066.500 398.500L1073.500 398.500Z" fill="#5b8fc4"/>
<!-- oblique dim -->
<path d="M1046.600 448.600L1052.400 426.400M1069.700 448.600L1075.500 426.400" stroke="#222" stroke-width="1.400"/>
<path d="M1055 434.300H1068" stroke="#5b8fc4" stroke-width="1.500"/>
<path d="M1051.300 434.300L1057 430.800V437.800ZM1071.700 434.300L1066 430.800V437.800Z" fill="#5b8fc4"/>
<!-- draw order 1 -->
<rect x="1046.300" y="466.500" width="12.900" height="12.800" fill="#666"/><rect x="1063" y="482.800" width="12.800" height="12.800" fill="#666"/>
<rect x="1052.300" y="472" width="17.600" height="17.300" fill="#4a86c5" stroke="#f4f4f4" stroke-width="1"/>
<!-- draw order 2 -->
<rect x="1052.800" y="511" width="16.600" height="16" fill="#4a86c5"/>
<rect x="1045.800" y="503.700" width="13.900" height="13.800" fill="#666" stroke="#f4f4f4" stroke-width="1"/><rect x="1062.500" y="520.300" width="13.800" height="13.800" fill="#666" stroke="#f4f4f4" stroke-width="1"/>
<!-- draw order 3 -->
<rect x="1055.800" y="552" width="20" height="19.600" fill="#666"/>
<rect x="1045.800" y="541.700" width="21.100" height="20.300" fill="#4a86c5" stroke="#f4f4f4" stroke-width="1"/>
<!-- draw order 4 -->
<rect x="1046.300" y="580.300" width="20.100" height="19.300" fill="#4a86c5"/>
<rect x="1055.300" y="589.300" width="21" height="20.900" fill="#666" stroke="#f4f4f4" stroke-width="1"/>
<!-- eraser -->
<path d="M1084 211H1113.500" stroke="#7793b0" stroke-width="1.400"/>
<path d="M1104.500 182.400L1113.900 191.400L1099.500 205.500L1090 196.500Z" fill="#f9cb10"/>
<path d="M1090 196.500L1099.500 205.500L1097.500 207.500L1088 198.500Z" fill="#fff"/>
<path d="M1088 198.500L1097.500 207.500L1094.500 210.300H1091.500L1084.300 203.300Q1083.700 202.600 1084.300 202Z" fill="#f4470c"/>
<!-- copy -->
<circle cx="1090" cy="227" r="6.200" fill="#666"/>
<path d="M1097 225H1103.500Q1106.300 225 1106.300 227.800V231" fill="none" stroke="#555" stroke-width="1.500"/>
<path d="M1106.300 236L1102.800 230.500H1109.800Z" fill="#555"/>
<circle cx="1109" cy="242.800" r="6.200" fill="#4a86c5"/>
<circle cx="1099.200" cy="242.800" r="6.800" fill="#4a86c5" stroke="#f4f4f4" stroke-width="1"/>
<!-- move -->
<path d="M1098.900 258L1104.400 265H1100.900V271H1106.900V267.500L1113.900 273L1106.900 278.500V275H1100.900V281H1104.400L1098.900 288L1093.400 281H1096.900V275H1090.900V278.500L1083.900 273L1090.900 267.500V271H1096.900V265H1093.400Z" fill="#666"/>
<!-- rotate -->
<path d="M1110 319A13.300 13.300 0 1 1 1104 299.500" fill="none" stroke="#333" stroke-width="1.400"/>
<path d="M1100.700 305.500L1112 296.800V308Z" fill="#666"/>
<!-- scale -->
<path d="M1084.500 345.500V334.900H1113.500V363.300H1103" fill="none" stroke="#555" stroke-width="1.500"/>
<rect x="1084" y="349" width="15.200" height="14.800" rx="1" fill="#666"/>
<!-- stretch -->
<path d="M1113.500 381.400H1105.200V374.600H1092.400V380.800H1089Q1084.500 381 1084.500 386.500V395Q1084.500 399 1088.500 399H1113.500" fill="none" stroke="#555" stroke-width="1.400"/>
<path d="M1113.500 385.500H1101.200V378.600H1096.400V385H1091.500Q1088.700 385.200 1088.700 388V392.500Q1088.700 394.800 1091 394.800H1113.500" fill="none" stroke="#a9b9c9" stroke-width="1.400"/>
<!-- array -->
<g fill="#f4f4f4" stroke-width="1.500"><rect x="1085.200" y="411" width="12" height="12" stroke="#333"/><rect x="1101.200" y="411" width="12" height="12" stroke="#333"/><rect x="1085.200" y="427" width="12" height="12" fill="#e6edf5" stroke="#9db3cc"/><rect x="1101.200" y="427" width="12" height="12" stroke="#333"/></g>
<!-- mirror -->
<path d="M1085.200 476.500H1096.800V451Z" fill="#f4f4f4" stroke="#222" stroke-width="1.400"/>
<path d="M1100.700 449V477H1113.500Z" fill="#4a86c5"/>
<!-- break spline -->
<path d="M1084.500 507.300C1085 499 1087.500 494.500 1090 493.600" fill="none" stroke="#222" stroke-width="1.500" stroke-dasharray="2.500 1.800"/>
<path d="M1090 493.600C1096.500 492.500 1098.500 505.500 1105 505.500C1109 505.500 1112 502 1113.500 499" fill="none" stroke="#222" stroke-width="1.500"/>
<!-- chamfer -->
<path d="M1084.500 546.700V553.200H1113.500V524.400H1112" fill="none" stroke="#222" stroke-width="1.400"/>
<path d="M1084.500 546.700V524.400H1112" fill="none" stroke="#222" stroke-width="1.400" stroke-dasharray="2.200 1.800"/>
<path d="M1084.500 546.700L1112 524.400" stroke="#7c9fc5" stroke-width="1.500"/>
<!-- fillet -->
<path d="M1084.500 582V591.300H1113.500V562.300H1104" fill="none" stroke="#222" stroke-width="1.400"/>
<path d="M1084.500 582V562.300H1104" fill="none" stroke="#222" stroke-width="1.400" stroke-dasharray="2.200 1.800"/>
<path d="M1084.500 582C1085 570 1092 563 1104 562.300" fill="none" stroke="#7c9fc5" stroke-width="1.500"/>
<!-- trim -->
<path d="M1090.900 626.800L1097.200 602.200" stroke="#111" stroke-width="1.700"/>
<path d="M1084.500 614.200H1090" stroke="#111" stroke-width="1.700"/>
<path d="M1097.500 614.200H1104M1107 614.200H1113.500" stroke="#8fa9c5" stroke-width="1.700"/>
<!-- extend -->
<path d="M1107.500 664.400L1113.900 640.900" stroke="#111" stroke-width="1.700"/>
<path d="M1086.400 649.600H1097" stroke="#444" stroke-width="1.500"/><path d="M1101 649.600L1095.500 646.300V652.900Z" fill="#444"/>
<path d="M1084.500 657.800H1090" stroke="#111" stroke-width="1.700"/>
<path d="M1093 657.800H1097M1099 657.800H1103M1105 657.800H1107" stroke="#8fa9c5" stroke-width="1.500"/>
<!-- 3d box -->
<path d="M1085.600 685.100L1094.700 677.300H1112L1103 685.100Z" fill="#555"/>
<rect x="1084.500" y="689.200" width="16.700" height="16.300" fill="#666"/>
<path d="M1104.200 688.200L1113.900 681.400V697.200L1104.200 705Z" fill="#4a86c5"/>
<!-- break -->
<path d="M1094.700 719.400H1087Q1084.500 719.400 1084.500 722V737.800Q1084.500 740.300 1087 740.300H1111Q1113.500 740.300 1113.500 737.800V722Q1113.500 719.400 1111 719.400H1103.700" fill="none" stroke="#444" stroke-width="1.400"/>
<g fill="#5b8cc0"><rect x="1090" y="717" width="5" height="5"/><rect x="1103.500" y="717" width="5" height="5"/></g>
</svg>
</div><!--/rightbar-->
<div id="canvas" class="abs"><svg class="abs" style="left:0;top:0" width="959" height="593" viewBox="-1 -1 959 593">
<rect x="-0.600" y="-0.600" width="958.200" height="591.900" fill="#000"/>
<g fill="none" stroke="#c58fca" stroke-width="1.1" stroke-dasharray="51.5 3 3 2.5"><path d="M475.00 312.40 L873.00 312.40"/><path d="M674.60 121.50 L674.60 512.50"/></g>
<g fill="none" stroke="#b27fb8" stroke-width="1" stroke-dasharray="51.5 3 3 2.5"><path d="M533.10 170.80 L815.90 453.80"/><path d="M533.10 453.80 L815.90 170.80"/></g>
<g fill="none" stroke="#fff" stroke-width="2"><circle cx="264.80" cy="305.40" r="117.4"/><path d="M264.80 188.00 L163.13 246.70 L163.13 364.10 L264.80 422.80 L366.47 364.10 L366.47 246.70Z"/><path d="M264.80 188.00 L163.13 364.10" /><path d="M264.80 188.00 L366.47 364.10" /><path d="M264.80 422.80 L163.13 246.70" /><path d="M264.80 422.80 L366.47 246.70" /><rect x="222" y="263" width="85.8" height="85.4"/><circle cx="264.90" cy="305.70" r="42.4"/><circle cx="674.50" cy="312.20" r="117.3"/><path d="M674.50 194.90 L572.92 253.55 L572.92 370.85 L674.50 429.50 L776.08 370.85 L776.08 253.55Z"/><path d="M674.50 194.90 L572.92 370.85" /><path d="M674.50 194.90 L776.08 370.85" /><path d="M674.50 429.50 L572.92 253.55" /><path d="M674.50 429.50 L776.08 253.55" /></g>
<g fill="none" stroke="#ffff1a" stroke-width="2"><path d="M80.00 188.00 H103 M80.00 422.70 H103 M89.00 188.00 V422.70000000000005"/></g>
<g fill="#ffff1a"><rect x="87" y="194" width="4" height="4.500"/><rect x="87" y="412.5" width="4" height="4.500"/></g>
<text transform="translate(84 316) rotate(-90)" font-family="'Liberation Serif',serif" font-size="19" fill="#d6d640" letter-spacing="1.5">50</text>
<g fill="none" stroke="#fff" stroke-width="1.2"><path d="M855.30 337.00 V591.300 M610.00 582.30 H957"/><rect x="844" y="571.6" width="22.500" height="22.500"/></g>
<g fill="#808080"><rect x="763.5" y="553.500" width="164.500" height="8.500" fill="none" stroke="#8a8a8a"/><rect x="763" y="557.5" width="23" height="4.500"/><rect x="786" y="553" width="47" height="4.500"/><rect x="833" y="557.5" width="95" height="4.500"/></g>
<g fill="#8c8c8c" font-family="'Liberation Sans',sans-serif" font-size="11.5"><text x="783" y="550.3">5</text><text x="921" y="550.3">35</text><text x="760" y="572.3">0</text><text x="826.5" y="572.3">15</text></g>
<g fill="none" stroke="#fff" stroke-width="1.2"><rect x="19.30" y="563.30" width="8.300" height="8.300"/><path d="M23.50 563.00 V528.30 M28.00 567.30 H62.70"/>
<path d="M23.50 517.50 L19.50 528.30 H27.5Z M23.50 528.00 V520"/>
<path d="M73.50 567.30 L62.70 563.50 V571.30Z M62.70 567.30 H70"/>
<path d="M83.00 562.20 L92.00 572.00 M92.00 562.20 L83.00 572.00"/>
<path d="M19.00 499.00 L23.50 502.30 L28.50 499.00 M23.50 502.30 V509"/></g>
</svg></div>
<div id="laytabs" class="abs">
<svg class="abs" style="left:0;top:0" width="957" height="19" viewBox="0 0 957 19">
<rect x="0.500" y="1.500" width="15.500" height="15.500" fill="#f6f6f6" stroke="#c4c4c4"/><rect x="16" y="1.500" width="15.500" height="15.500" fill="#f6f6f6" stroke="#c4c4c4"/>
<path d="M11 4.800v9l-5.500-4.500z M21 4.800v9l5.500-4.500z" fill="#6a6a6a"/>
<path d="M32 0 H78.900 L72.300 17.500 H39.700 Z" fill="#fff"/>
<path d="M32 0.500 L39.700 17.500 H72.300 L78.600 0.500 M76 9 L81 17.500 H118.500 L121.500 10 M117.800 0.500 L124.900 17.500 H164 L171 0.500" fill="none" stroke="#222" stroke-width="1.100"/>
</svg>
<div class="t" style="left:43.500px;top:3.500px;font-size:12.3px">模型</div>
<div class="t" style="left:83px;top:3.500px;font-size:12.3px">布局1</div>
<div class="t" style="left:129px;top:3.500px;font-size:12.3px">布局2</div>
</div>
<div class="abs" style="left:0;top:778px;width:1119px;height:4px;background:#dcdcdc"></div>
<div class="abs" style="left:1121px;top:58px;width:1px;height:802px;background:#959ca6;z-index:6"></div>
<div class="abs" style="left:0;top:859px;width:1122px;height:1px;background:#8a8a8a;z-index:6"></div>
<div id="cmd" class="abs">
<div class="abs" style="left:0;top:0;width:1118px;height:2px;background:#6d6d6d"></div>
<div class="abs" style="left:1px;top:0;width:2px;height:56px;background:#6d6d6d"></div>
<div class="abs" style="left:2px;top:34px;width:1100px;height:1px;background:#a0a0a0"></div>
<div class="abs" style="left:1102px;top:2px;width:16px;height:31px;background:#f0f0f0"></div>
<svg class="abs" style="left:1102px;top:2px" width="16" height="31" viewBox="0 0 16 31" fill="none" stroke="#404040" stroke-width="1.6"><path d="M4.500 9.500l3.500-3.500l3.500 3.500 M4.500 21l3.500 3.500l3.500-3.500"/></svg>
<div class="abs" style="left:1032px;top:35px;width:70px;height:18px;background:#f0f0f0"></div>
<div class="abs" style="left:1047px;top:36px;width:17px;height:16px;background:#cdcdcd"></div>
<svg class="abs" style="left:1032px;top:35px" width="70" height="18" viewBox="0 0 70 18" fill="none" stroke="#404040" stroke-width="1.6"><path d="M9.500 5l-3.500 3.500l3.500 3.500 M58.500 5l3.500 3.500l-3.500 3.500"/></svg>
<div class="abs" style="left:1102px;top:33px;width:16px;height:22px;background:#f0f0f0"></div>
<div class="abs" style="left:1118px;top:0;width:4px;height:56px;background:#f0f0f0"></div>
<div class="t" style="left:11.500px;top:3px;font-size:12.5px;font-family:'Liberation Mono','Noto Sans CJK SC',monospace">指定基点:</div>
<div class="t" style="left:3px;top:21px;font-size:11px;font-family:'Liberation Mono','Noto Serif CJK SC',monospace"><span style="font-size:12px">是否删除源对象吗？</span>[<span style="font-size:12px">是</span>(Y)/<span style="font-size:12px">否</span>(N)]&lt;N&gt;:</div>
<div class="t" style="left:6px;top:36.500px;font-size:12px;font-family:'Liberation Serif','Noto Serif CJK SC',serif">命令:</div>
<div class="t" style="left:44px;top:38.500px;font-size:12.5px">REC</div>
<div class="abs" style="left:71px;top:36px;width:1.500px;height:15px;background:#000"></div>
</div>
<div id="orange" class="abs"></div>
<div id="status" class="abs">
<div class="t" style="left:4px;top:6.500px;font-size:12.5px">498214.255445,&nbsp; 173982.305486,&nbsp; 0.000000</div>
<div class="t st" style="left:589px">栅格</div>
<div class="abs sb" style="left:622px;width:34px"></div><div class="t st" style="left:627px">正交</div>
<div class="t st" style="left:660px">极轴</div>
<div class="abs sb" style="left:694px;width:59px"></div><div class="t st" style="left:697px">对象捕捉</div>
<div class="abs sb" style="left:754px;width:59px"></div><div class="t st" style="left:757px">对象追踪</div>
<div class="abs sb" style="left:814px;width:36px"></div><div class="t st" style="left:818px;font-size:12.5px">DYN</div>
<div class="abs sb" style="left:852px;width:35px"></div><div class="t st" style="left:855px">线宽</div>
<div class="t st" style="left:891px;color:#0a0ac8">提交软件问题或增加新功能</div>
<div class="abs" style="left:1047px;top:4px;width:71px;height:15px;background:#fff"></div>
<svg class="abs" style="left:1048px;top:3px" width="22" height="17" viewBox="1048 841 22 17"><path d="M1054 842.500L1059.200 842.500L1061.600 855.500L1051 855.500Z" fill="#1aa68c"/><path d="M1060 842.500L1063.800 842.500L1067 855.500L1062 855.500Z" fill="#1aa68c"/><path d="M1050.500 853.600L1064.800 845.800" stroke="#fff" stroke-width="1.300"/><path d="M1053.300 845L1051 855.500" stroke="#7fe3d2" stroke-width="1"/></svg>
<div class="t" style="left:1070.500px;top:6.500px;font-size:12.3px;color:#1a2433">MxCAD</div>
</div>
</body>
</html>
